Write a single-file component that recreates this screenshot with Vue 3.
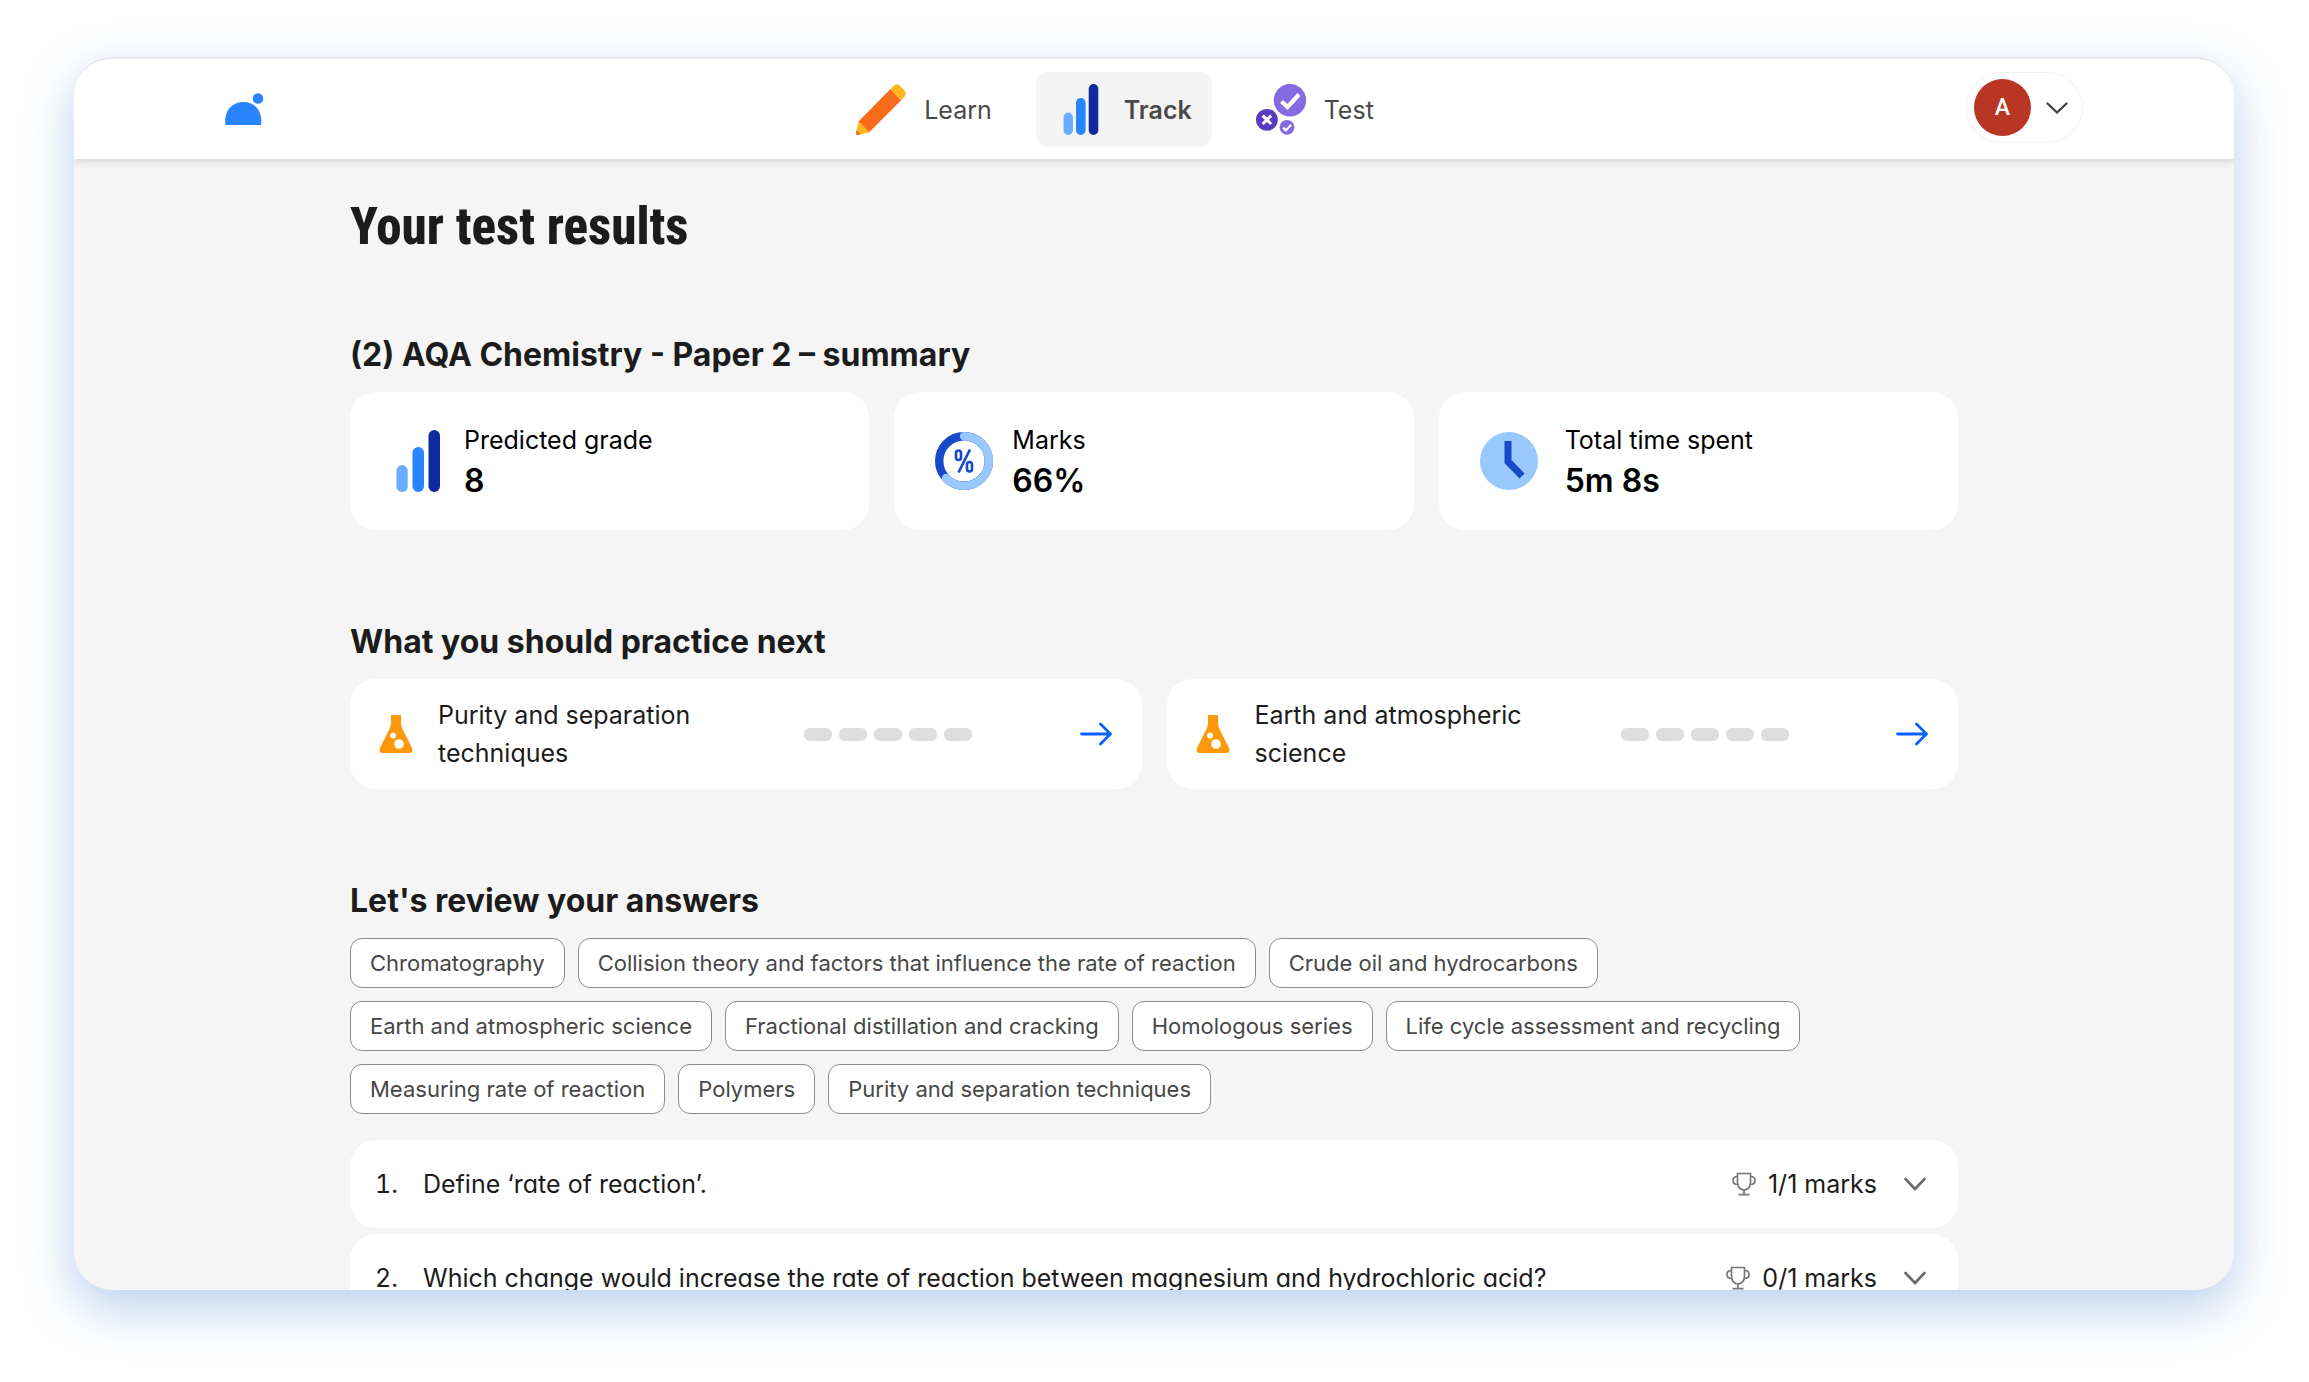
<template>
  <div class="page">
    <div class="window">
      <header class="topbar">
        <div class="topbar-inner">
          <a href="#" class="logo" aria-label="Home">
            <svg viewBox="0 0 39 33" width="39" height="33">
              <path d="M0.500 32 C-1.500 18 7 9 18.500 9 C30 9 38 18 36 32 Z" fill="#2884ff" />
              <circle cx="33" cy="5.500" r="5.300" fill="#2884ff" />
            </svg>
          </a>

          <nav class="nav">
            <a href="#" class="nav-item">
              <svg viewBox="0 0 50 51" width="50" height="51">
                <path d="M34.500 5 L38 1.500 Q41 -1 44 1.800 L48.500 6.500 Q51 9.500 48.500 12.500 L45 16.500 Z" fill="#ffb71b" />
                <path d="M34.500 5 L45 16.500 L13 48.500 L2.500 37.500 Z" fill="#f96a1b" />
                <path d="M2.500 37.500 L13 48.500 L1.500 51 Q0 51 0 49.500 Z" fill="#ffb71b" />
                <path d="M0.600 46 L5 50.300 L1.500 51 Q0 51 0 49.500 Z" fill="#f96a1b" />
              </svg>
              <span>Learn</span>
            </a>
            <a href="#" class="nav-item active" aria-current="page">
              <svg viewBox="0 0 50 51" width="50" height="51">
                <rect x="7.500" y="28.500" width="9.400" height="22.500" rx="4.700" fill="#6aadff" />
                <rect x="20" y="14" width="9.600" height="37" rx="4.800" fill="#2884ff" />
                <rect x="32.700" y="0" width="9.600" height="51" rx="4.800" fill="#0f2a9e" />
              </svg>
              <span>Track</span>
            </a>
            <a href="#" class="nav-item">
              <svg viewBox="0 0 50 51" width="50" height="51" fill="none">
                <circle cx="34" cy="16.300" r="16.200" fill="#846be4" />
                <circle cx="10.900" cy="35.800" r="10.900" fill="#5a3cc0" />
                <circle cx="31" cy="43.300" r="7.400" fill="#846be4" />
                <path d="M25.500 17.500 L31.500 23 L43 10.500" stroke="#fff" stroke-width="4.200" />
                <path d="M27 43.600 L29.900 46.400 L35.200 40.700" stroke="#fff" stroke-width="2.200" />
                <path d="M6.700 31.600 L15.100 40 M15.100 31.600 L6.700 40" stroke="#fff" stroke-width="3" />
              </svg>
              <span>Test</span>
            </a>
          </nav>

          <button type="button" class="account" aria-label="Account menu">
            <span class="avatar">A</span>
            <svg viewBox="0 0 22 12" width="22" height="12" fill="none">
              <path d="M1.500 1.500 L11 10.500 L20.500 1.500" stroke="#3c3c3c" stroke-width="2.200" stroke-linecap="round" />
            </svg>
          </button>
        </div>
      </header>

      <main class="content">
        <h1>Your test results</h1>

        <section>
          <h2>(2) AQA Chemistry - Paper 2 – summary</h2>
          <div class="stats">
            <div class="stat">
              <svg viewBox="0 0 56 62" width="56" height="62">
                <rect x="6.500" y="35" width="11.200" height="27" rx="5.600" fill="#6aadff" />
                <rect x="22.500" y="17" width="11.500" height="45" rx="5.700" fill="#2884ff" />
                <rect x="38.500" y="0" width="11.500" height="62" rx="5.700" fill="#0f2a9e" />
              </svg>
              <div>
                <p class="stat-label">Predicted grade</p>
                <p class="stat-value">8</p>
              </div>
            </div>
            <div class="stat">
              <svg viewBox="-1 0 60 58" width="60" height="58" fill="none">
                <circle cx="29" cy="29" r="24.800" stroke="#1749c9" stroke-width="8.400" />
                <path d="M29 4.200 A24.800 24.800 0 1 1 11 46" stroke="#99c8ff" stroke-width="8.400" stroke-linecap="round" />
                <rect x="21" y="18.500" width="5" height="9.500" rx="2.500" stroke="#1749c9" stroke-width="2.600" />
                <rect x="32" y="30" width="5" height="9.500" rx="2.500" stroke="#1749c9" stroke-width="2.600" />
                <path d="M35 17.500 L23.500 40.500" stroke="#1749c9" stroke-width="2.600" />
              </svg>
              <div>
                <p class="stat-label">Marks</p>
                <p class="stat-value">66%</p>
              </div>
            </div>
            <div class="stat">
              <svg viewBox="0 0 68 58" width="68" height="58" fill="none">
                <circle cx="30" cy="29" r="29" fill="#99c8ff" />
                <path d="M29 9 V29.500 L43 44" stroke="#1749c9" stroke-width="7" />
              </svg>
              <div>
                <p class="stat-label">Total time spent</p>
                <p class="stat-value">5m 8s</p>
              </div>
            </div>
          </div>
        </section>

        <section>
          <h2>What you should practice next</h2>
          <div class="topics">
            <a v-for="topic in topics" :key="topic" href="#" class="topic">
              <svg viewBox="0 0 34 38" width="34" height="38">
                <path d="M12 0 H22 V8 Q22 11 23.500 14 L33 33 Q34.500 38 30.500 38 H3.500 Q-0.500 38 1 33 L10.500 14 Q12 11 12 8 Z" fill="#fe980b" />
                <circle cx="14" cy="20.500" r="2.900" fill="#fff" />
                <circle cx="20" cy="29" r="4.800" fill="#fff" />
              </svg>
              <span class="topic-name">{{ topic }}</span>
              <span class="progress">
                <i v-for="n in 5" :key="n"></i>
              </span>
              <svg viewBox="0 0 32 24" width="32" height="24" fill="none">
                <path d="M1.500 12 H30 M20.500 2 L30.500 12 L20.500 22" stroke="#0a5fff" stroke-width="2.800" stroke-linecap="round" stroke-linejoin="round" />
              </svg>
            </a>
          </div>
        </section>

        <section>
          <h2>Let's review your answers</h2>
          <div class="tags">
            <button v-for="tag in tags" :key="tag" type="button" class="tag">{{ tag }}</button>
          </div>

          <div class="questions">
            <button v-for="(q, i) in questions" :key="i" type="button" class="question">
              <span class="number">{{ i + 1 }}.</span>
              <span class="question-text">{{ q.text }}</span>
              <svg viewBox="0 0 24 24" width="24" height="24" fill="none" stroke="#777" stroke-width="1.700">
                <path d="M5.500 1.500 H18.500 V10 C18.500 15 15.500 18 12 18 C8.500 18 5.500 15 5.500 10 Z" />
                <path d="M5.500 4.500 C2.500 4.500 1 6 1 8.500 C1 11 3 12.500 5.800 12.500 M18.500 4.500 C21.500 4.500 23 6 23 8.500 C23 11 21 12.500 18.200 12.500" />
                <path d="M12 18 V22.500 M6.500 22.700 H17.500" />
              </svg>
              <span class="marks">{{ q.marks }} marks</span>
              <svg viewBox="0 0 22 14" width="22" height="14" fill="none">
                <path d="M1.500 2 L11 12 L20.500 2" stroke="#6b6b6b" stroke-width="2.600" stroke-linecap="round" />
              </svg>
            </button>
          </div>
        </section>
      </main>
    </div>
  </div>
</template>

<script setup>
const topics = ['Purity and separation techniques', 'Earth and atmospheric science']

const tags = [
  'Chromatography',
  'Collision theory and factors that influence the rate of reaction',
  'Crude oil and hydrocarbons',
  'Earth and atmospheric science',
  'Fractional distillation and cracking',
  'Homologous series',
  'Life cycle assessment and recycling',
  'Measuring rate of reaction',
  'Polymers',
  'Purity and separation techniques',
]

const questions = [
  { text: 'Define ‘rate of reaction’.', marks: '1/1' },
  { text: 'Which change would increase the rate of reaction between magnesium and hydrochloric acid?', marks: '0/1' },
]
</script>

<style>
body {
  margin: 0;
  background: #fff;
}
</style>

<style scoped>
* {
  box-sizing: border-box;
}

.page {
  display: flex;
  height: 100vh;
  padding: 57px 75px 92px 74px;
  font-family: Inter, 'Liberation Sans', sans-serif;
  color: #1c1c1c;
}

.window {
  flex: 1;
  min-width: 0;
  overflow: hidden;
  border-top: 2px solid #e6e8e9;
  border-radius: 38px;
  background: #f5f5f5;
  box-shadow: 0 18px 50px rgba(50, 115, 205, 0.34);
}

.topbar {
  position: relative;
  height: 100px;
  padding: 13px 151px;
  background: #fff;
  box-shadow: 0 1px 8px rgba(0, 0, 0, 0.18);
}

.topbar-inner {
  display: flex;
  align-items: flex-start;
  justify-content: space-between;
}

.logo,
.logo svg,
.nav-item svg,
.stat svg,
.topic svg,
.question svg,
.account svg {
  display: block;
  flex: none;
}

.logo {
  align-self: center;
}

.nav {
  display: flex;
  gap: 24px;
}

.nav-item {
  display: flex;
  align-items: center;
  gap: 18px;
  height: 75px;
  padding: 0 20px;
  border-radius: 12px;
  color: #4a4a4a;
  font-size: 25px;
  text-decoration: none;
}

.nav-item.active {
  background: #f4f4f4;
  font-weight: 600;
}

.account {
  display: flex;
  align-items: center;
  gap: 15px;
  height: 71px;
  padding: 0 14px 0 7px;
  border: 1px solid #f0f0f0;
  border-radius: 36px;
  background: #fff;
}

.avatar {
  width: 57px;
  height: 57px;
  border-radius: 50%;
  background: #ba3624;
  color: #fff;
  font: 500 23px/57px Roboto, sans-serif;
  text-align: center;
}

.content {
  max-width: 1608px;
  margin: 0 auto;
}

h1,
h2,
p {
  margin: 0;
}

h1 {
  padding-top: 36px;
  font: 800 51px/64px 'Roboto Condensed', 'Open Sans Condensed', 'Noto Sans Condensed', 'Arial Narrow', Roboto, sans-serif;
}

h2 {
  margin-bottom: 17px;
  font-size: 32px;
  font-weight: 700;
  line-height: 40px;
}

section {
  margin-bottom: 92px;
}

h1 + section {
  margin-top: 76px;
}

.stats {
  display: grid;
  grid-template-columns: repeat(3, 1fr);
  gap: 25px;
}

.stat {
  display: flex;
  align-items: center;
  gap: 18px;
  height: 138px;
  padding: 0 40px;
  border-radius: 26px;
  background: #fff;
  color: #000;
}

.stat-label {
  font-size: 25px;
  line-height: 40px;
}

.stat-value {
  font-size: 32px;
  font-weight: 600;
  line-height: 42px;
}

.topics {
  display: grid;
  grid-template-columns: repeat(2, 1fr);
  gap: 25px;
}

.topic {
  display: flex;
  align-items: center;
  height: 110px;
  padding: 0 30px 0 29px;
  border-radius: 26px;
  background: #fff;
  color: #1c1c1c;
  text-decoration: none;
}

.topic-name {
  width: 300px;
  margin-left: 25px;
  font-size: 25px;
  line-height: 38px;
}

.progress {
  display: flex;
  gap: 7px;
  margin: 0 auto 0 66px;
}

.progress i {
  width: 28px;
  height: 13px;
  border-radius: 6px;
  background: #dedede;
}

.tags {
  display: flex;
  flex-wrap: wrap;
  gap: 13px;
}

.tag {
  height: 50px;
  padding: 0 19px;
  border: 1px solid #8c8c8c;
  border-radius: 12px;
  background: #fff;
  color: #474747;
  font: 400 22px/28px Inter, sans-serif;
}

.questions {
  display: flex;
  flex-direction: column;
  gap: 6px;
  margin-top: 26px;
}

.question {
  display: flex;
  align-items: center;
  height: 88px;
  padding: 0 32px 0 25px;
  border: 0;
  border-radius: 26px;
  background: #fff;
  color: #1c1c1c;
  font: 400 25px/32px Inter, sans-serif;
  text-align: left;
}

.number {
  width: 48px;
  font-variant-numeric: tabular-nums;
}

.question-text {
  flex: 1;
  font-feature-settings: 'cv11';
}

.marks {
  margin: 0 27px 0 12px;
}
</style>
